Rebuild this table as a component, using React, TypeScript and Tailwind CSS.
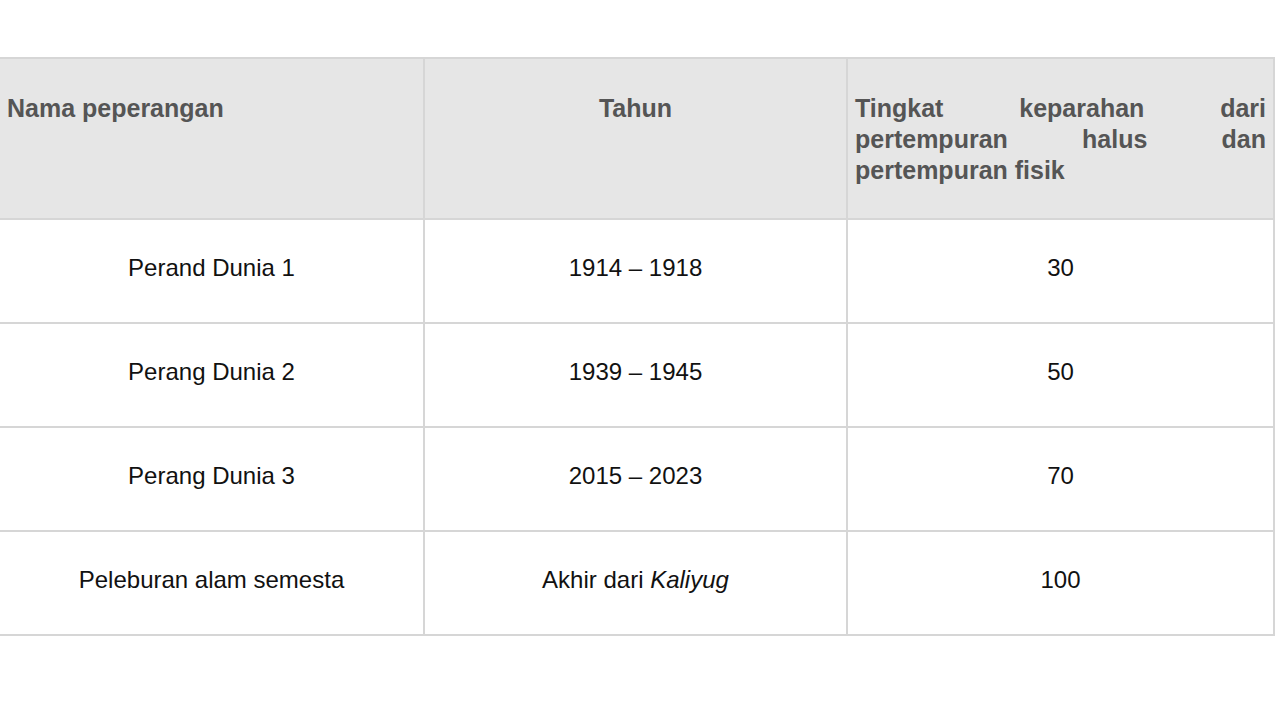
import React from "react";

const rows: { a: string; b: React.ReactNode; c: string }[] = [
  { a: "Perand Dunia 1", b: "1914 – 1918", c: "30" },
  { a: "Perang Dunia 2", b: "1939 – 1945", c: "50" },
  { a: "Perang Dunia 3", b: "2015 – 2023", c: "70" },
  {
    a: "Peleburan alam semesta",
    b: (
      <>
        Akhir dari <em className="italic">Kaliyug</em>
      </>
    ),
    c: "100",
  },
];

export default function App() {
  return (
    <div
      className="w-[1280px] h-[720px] bg-white overflow-hidden"
      style={{ fontFamily: '"Liberation Sans", Arial, sans-serif' }}
    >
      <div className="mt-[57px] w-[1275px] border-t-2 border-[#d6d6d6]">
        <div className="grid grid-cols-[425px_423px_427px] bg-[#e6e6e6] border-b-2 border-[#d6d6d6] h-[161px] text-[25px] leading-[31px] font-bold text-[#555555]">
          <div className="border-r-2 border-[#d6d6d6] pl-[7px] pt-[34px] text-left">
            Nama peperangan
          </div>
          <div className="border-r-2 border-[#d6d6d6] pt-[34px] text-center">
            Tahun
          </div>
          <div className="border-r-2 border-[#d6d6d6] pl-[7px] pr-[7px] pt-[34px] text-justify">
            Tingkat keparahan dari pertempuran halus dan pertempuran fisik
          </div>
        </div>
        {rows.map((r, i) => (
          <div
            key={i}
            className="grid grid-cols-[425px_423px_427px] bg-white border-b-2 border-[#d6d6d6] h-[104px] text-[24px] leading-[30px] text-[#111111]"
          >
            <div className="border-r-2 border-[#d6d6d6] pt-[33px] text-center">
              {r.a}
            </div>
            <div className="border-r-2 border-[#d6d6d6] pt-[33px] text-center">
              {r.b}
            </div>
            <div className="border-r-2 border-[#d6d6d6] pt-[33px] text-center">
              {r.c}
            </div>
          </div>
        ))}
      </div>
    </div>
  );
}
